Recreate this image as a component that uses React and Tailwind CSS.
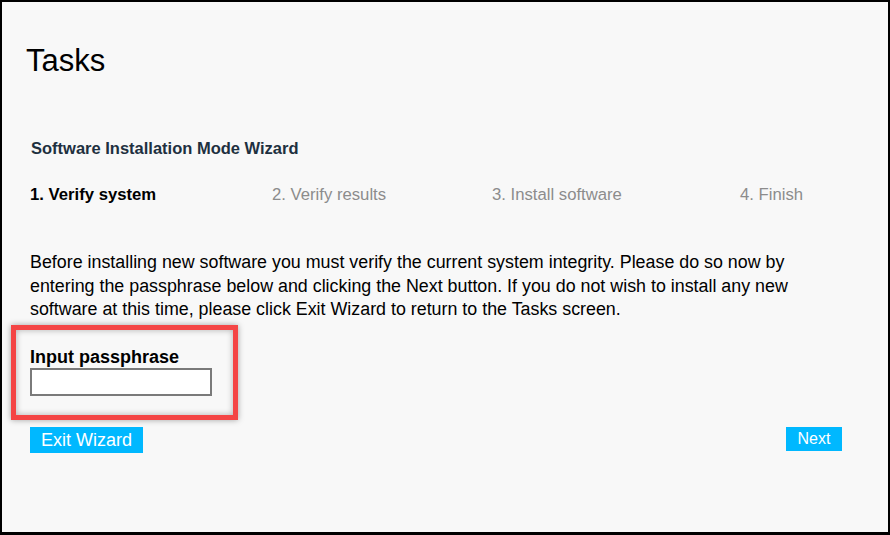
export default function App() {
  const steps = [
    { label: '1. Verify system', active: true, w: 'w-[242px]' },
    { label: '2. Verify results', active: false, w: 'w-[220px]' },
    { label: '3. Install software', active: false, w: 'w-[248px]' },
    { label: '4. Finish', active: false, w: '' },
  ];

  return (
    <div
      className="w-[890px] h-[535px] bg-[#f8f8f8] border-t-2 border-l-2 border-r-2 border-b-[3px] border-black pl-[28px] pr-[46px] text-black overflow-hidden"
      style={{ fontFamily: '"Liberation Sans", Arial, sans-serif' }}
    >
      <h1 className="pt-[41px] -ml-[4px] text-[31px] leading-[36px] font-normal">Tasks</h1>

      <h2 className="mt-[59px] ml-[1px] text-[16.5px] leading-[20px] font-bold text-[#1e3040]">
        Software Installation Mode Wizard
      </h2>

      <div className="mt-[27px] flex text-[16.7px] leading-[20px]">
        {steps.map((s) => (
          <div
            key={s.label}
            className={`${s.w} ${s.active ? 'font-bold text-black' : 'text-[#8c8c8c]'}`}
          >
            {s.label}
          </div>
        ))}
      </div>

      <p className="mt-[46px] text-[17.85px] leading-[23.5px]">
        Before installing new software you must verify the current system integrity. Please do so now by
        <br />
        entering the passphrase below and clicking the Next button. If you do not wish to install any new
        <br />
        software at this time, please click Exit Wizard to return to the Tasks screen.
      </p>

      <div className="mt-[3px] -ml-[19px] w-[227px] border-[5px] border-[#f44545] pl-[14px] pt-[17px] pb-[19px] shadow-[0_0_6px_rgba(0,0,0,0.35),inset_0_0_6px_rgba(0,0,0,0.3)]">
        <label className="block text-[18px] leading-[20px] font-bold">Input passphrase</label>
        <input
          type="text"
          className="mt-[1px] block w-[182px] h-[28px] bg-white border-2 border-[#7a7a7a] outline-none"
        />
      </div>

      <div className="mt-[7px] flex items-start justify-between">
        <button className="h-[26px] w-[113px] bg-[#00b8ff] text-white text-[18px] leading-[26px]">
          Exit Wizard
        </button>
        <button className="h-[24px] w-[56px] bg-[#00b8ff] text-white text-[16px] leading-[24px]">
          Next
        </button>
      </div>
    </div>
  );
}
